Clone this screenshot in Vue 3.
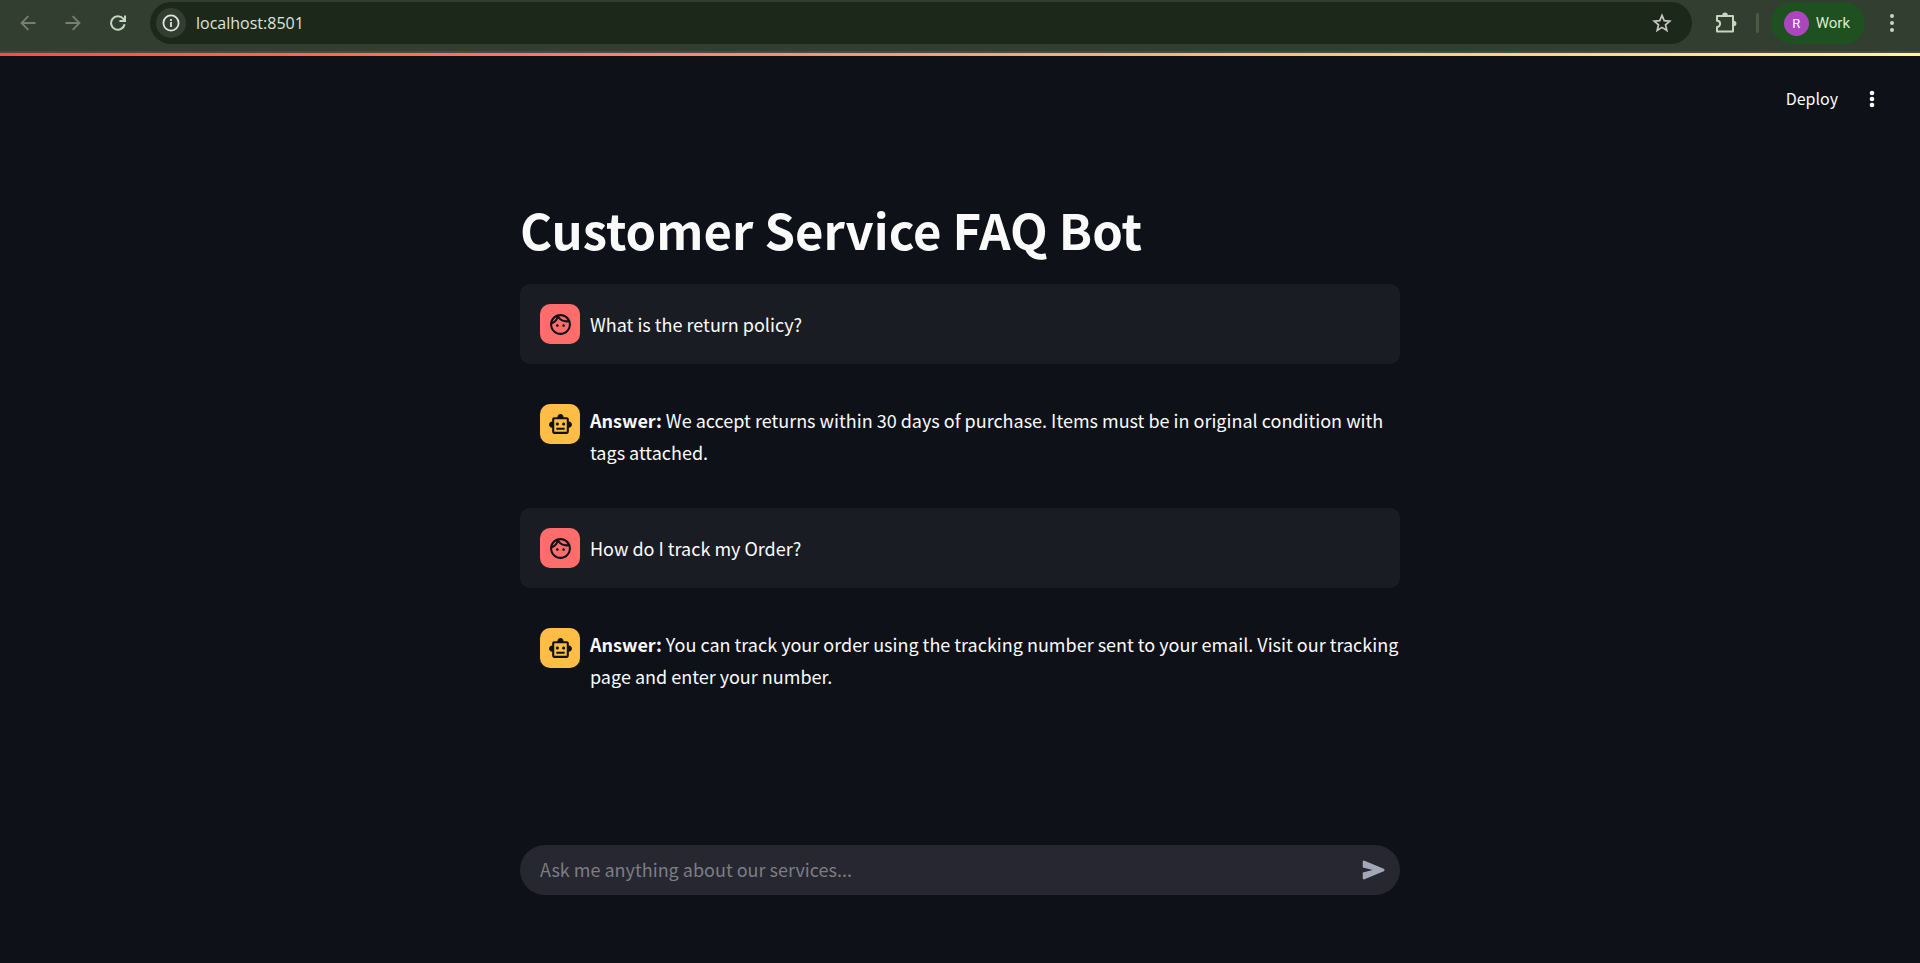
<script setup>
import { ref } from 'vue'

const address = ref('localhost:8501')
const question = ref('')
const messages = [
  { id: 1, role: 'user', text: 'What is the return policy?' },
  {
    id: 2,
    role: 'assistant',
    text: 'We accept returns within 30 days of purchase. Items must be in original condition with tags attached.',
  },
  { id: 3, role: 'user', text: 'How do I track my Order?' },
  {
    id: 4,
    role: 'assistant',
    text: 'You can track your order using the tracking number sent to your email. Visit our tracking page and enter your number.',
  },
]
</script>

<template>
  <div class="window">
    <header class="browser">
      <nav class="nav" aria-label="Browser navigation">
        <button class="tool dim" type="button" aria-label="Back">
          <svg width="16" height="16" viewBox="0 0 16 16" fill="none" stroke="currentColor" stroke-width="1.8"><path d="M15.5 8H1.5M8.3 1.2 1.5 8l6.8 6.8" /></svg>
        </button>
        <button class="tool dim" type="button" aria-label="Forward">
          <svg width="16" height="16" viewBox="0 0 16 16" fill="none" stroke="currentColor" stroke-width="1.8"><path d="M.5 8h14M7.7 1.2 14.5 8l-6.8 6.8" /></svg>
        </button>
        <button class="tool" type="button" aria-label="Reload">
          <svg width="16" height="16" viewBox="0 0 16 16" fill="none" stroke="currentColor" stroke-width="2"><path d="M14.6 9.2A6.8 6.8 0 1 1 13.2 3.7L14.8 5.6" /><path d="M15 .5v5.6H9.4" /></svg>
        </button>
      </nav>
      <div class="address">
        <button class="site-info" type="button" aria-label="Site information">
          <svg width="18" height="18" viewBox="0 0 18 18" fill="none" stroke="currentColor" stroke-width="1.8"><circle cx="9" cy="9" r="7.6" /><path d="M9 8v5M9 5v2" /></svg>
        </button>
        <input v-model="address" class="url" type="text" aria-label="Address" />
        <button class="star" type="button" aria-label="Bookmark">
          <svg width="20" height="20" viewBox="0 0 20 20" fill="none" stroke="currentColor" stroke-width="1.7"><path d="m10 2.4 2.2 5.2 5.6.5-4.3 3.7 1.3 5.6-4.8-3-4.8 3 1.3-5.6L2.2 8.1l5.6-.5z" /></svg>
        </button>
      </div>
      <button class="tool extensions" type="button" aria-label="Extensions">
        <svg width="22" height="22" viewBox="0 0 22 22"><path d="M2 4h16v15.500H2v-4.600a2.900 2.900 0 0 0 0-6.200z" fill="none" stroke="currentColor" stroke-width="2" stroke-linejoin="round" /><path d="M7.200 3.400a2.800 2.800 0 0 1 5.600 0zM18.600 8.700a2.800 2.800 0 0 1 0 5.600z" fill="currentColor" /></svg>
      </button>
      <span class="divider"></span>
      <button class="profile" type="button">
        <span class="initial">R</span>
        <span>Work</span>
      </button>
      <button class="tool menu" type="button" aria-label="Browser menu">
        <svg width="6" height="20" viewBox="0 0 6 20" fill="currentColor"><circle cx="3" cy="3" r="2" /><circle cx="3" cy="10" r="2" /><circle cx="3" cy="17" r="2" /></svg>
      </button>
    </header>
    <div class="decoration"></div>

    <div class="app-bar">
      <button class="deploy" type="button">Deploy</button>
      <button class="app-menu" type="button" aria-label="Main menu">
        <svg width="6" height="18" viewBox="0 0 6 18" fill="currentColor"><circle cx="3" cy="3" r="2.300" /><circle cx="3" cy="9" r="2.300" /><circle cx="3" cy="15" r="2.300" /></svg>
      </button>
    </div>

    <main class="column chat">
      <h1>Customer Service FAQ Bot</h1>
      <article v-for="m in messages" :key="m.id" class="message" :class="m.role">
        <span class="avatar">
          <svg v-if="m.role === 'user'" width="25" height="25" viewBox="0 0 24 24" fill="currentColor"><path d="M10.250 13c0 .69-.56 1.250-1.250 1.250S7.750 13.690 7.750 13s.56-1.250 1.250-1.250 1.250.56 1.250 1.250zM15 11.750c-.69 0-1.250.56-1.250 1.250s.56 1.250 1.250 1.250 1.250-.56 1.250-1.250-.56-1.250-1.250-1.250zm7 .25c0 5.520-4.480 10-10 10S2 17.520 2 12 6.480 2 12 2s10 4.480 10 10zM10.660 4.120C12.060 6.440 14.600 8 17.500 8c.46 0 .91-.05 1.340-.12C17.440 5.560 14.900 4 12 4c-.46 0-.91.05-1.340.12zM4.420 9.470c1.710-.97 3.030-2.550 3.660-4.440C6.370 6 5.050 7.580 4.420 9.470zM20 12c0-.78-.12-1.530-.33-2.240-.7.15-1.420.24-2.170.24-3.130 0-5.920-1.440-7.760-3.690C8.690 8.870 6.600 10.880 4 11.860c.01.04 0 .09 0 .14 0 4.410 3.590 8 8 8s8-3.590 8-8z" /></svg>
          <svg v-else width="25" height="25" viewBox="0 0 24 24" fill="currentColor"><path d="M20 9V7c0-1.100-.9-2-2-2h-3c0-1.660-1.340-3-3-3S9 3.340 9 5H6c-1.100 0-2 .9-2 2v2c-1.660 0-3 1.340-3 3s1.340 3 3 3v4c0 1.100.9 2 2 2h12c1.100 0 2-.9 2-2v-4c1.660 0 3-1.340 3-3s-1.340-3-3-3zm-2 10H6V7h12v12zM9 13c-.83 0-1.500-.67-1.500-1.500S8.170 10 9 10s1.500.67 1.500 1.500S9.830 13 9 13zm7.500-1.500c0 .83-.67 1.500-1.500 1.500s-1.500-.67-1.500-1.500.67-1.500 1.500-1.500 1.500.67 1.500 1.500zM8 15h8v2H8v-2z" /></svg>
        </span>
        <p><template v-if="m.role === 'assistant'"><strong>Answer:</strong>{{ ' ' }}</template>{{ m.text }}</p>
      </article>
    </main>

    <footer class="column composer">
      <form class="ask" @submit.prevent>
        <input v-model="question" type="text" aria-label="Question" placeholder="Ask me anything about our services..." />
        <button type="submit" aria-label="Send">
          <svg width="30" height="30" viewBox="0 -960 960 960" fill="currentColor"><path d="M792-443 176-183q-20 8-38-3.500T120-220v-180l320-80-320-80v-180q0-22 18-33.500t38-3.500l616 260q25 11 25 37t-25 37Z" /></svg>
        </button>
      </form>
    </footer>
  </div>
</template>

<style>
body {
  margin: 0;
  background: #0e1117;
}
</style>

<style scoped>
.window {
  min-height: 100vh;
  display: flex;
  flex-direction: column;
  background: #0e1117;
  color: #fafafa;
  font-family: "Noto Sans CJK SC", "Noto Sans", sans-serif;
  font-size: 18px;
  line-height: 32px;
}

.window * {
  box-sizing: border-box;
}

button,
input {
  margin: 0;
  padding: 0;
  border: 0;
  background: none;
  color: inherit;
  font: inherit;
}

button {
  display: flex;
  align-items: center;
  justify-content: center;
}

svg {
  display: block;
}

.browser {
  display: flex;
  align-items: center;
  padding: 2px 18px 7px 12px;
  border-bottom: 2px solid #464b48;
  background: #323e2f;
  color: #c4d8bd;
  font-family: "Open Sans", "Noto Sans", sans-serif;
  font-size: 16px;
  line-height: 24px;
}

.nav {
  display: flex;
  gap: 13px;
  margin-right: 16px;
}

.tool {
  width: 32px;
  height: 32px;
}

.dim {
  color: #768070;
}

.address {
  flex: 1;
  display: flex;
  align-items: center;
  height: 42px;
  padding: 0 20px 0 6px;
  border-radius: 21px;
  background: #1c2819;
  color: #dfe4dc;
}

.site-info {
  width: 30px;
  height: 30px;
  margin-right: 10px;
  border-radius: 50%;
  background: #323e2f;
}

.url {
  flex: 1;
  min-width: 0;
}

.star {
  color: #c7c8c3;
}

.extensions {
  margin-left: 18px;
}

.divider {
  width: 3px;
  height: 20px;
  margin: 0 12px 0 14px;
  border-radius: 2px;
  background: #4a5a46;
}

.profile {
  gap: 7px;
  height: 42px;
  padding: 0 15px 0 13px;
  border-radius: 21px;
  background: #1f5120;
  color: #dcebd3;
  font-family: Roboto, sans-serif;
  font-size: 15px;
}

.initial {
  width: 25px;
  height: 25px;
  border-radius: 50%;
  background: #ab47bc;
  color: #fff;
  font-size: 13px;
  line-height: 25px;
  text-align: center;
}

.menu {
  width: 20px;
  margin-left: 17px;
}

.decoration {
  height: 3px;
  background: linear-gradient(90deg, #ff4b4b, #fffd80);
}

.app-bar {
  display: flex;
  align-items: center;
  justify-content: flex-end;
  gap: 24px;
  padding: 26px 38px 26px 0;
}

.deploy {
  padding-bottom: 2px;
  font-size: 16px;
}

.app-menu {
  width: 20px;
  height: 32px;
}

.column {
  width: calc(100% - 40px);
  max-width: 880px;
  margin: 0 auto;
}

.chat {
  display: flex;
  flex-direction: column;
  gap: 20px;
  padding: 54px 0 40px;
}

h1 {
  margin: 0;
  padding-bottom: 2px;
  font-size: 49px;
  font-weight: 700;
  line-height: 66px;
}

.message {
  display: flex;
  gap: 10px;
  padding: 20px;
  border-radius: 10px;
}

.message.assistant {
  padding-right: 0;
}

.user {
  align-items: center;
  background: #1a1c24;
}

.avatar {
  flex: none;
  display: flex;
  align-items: center;
  justify-content: center;
  width: 40px;
  height: 40px;
  border-radius: 10px;
  background: #ff6c6c;
  color: #0e1117;
}

.assistant .avatar {
  background: #ffbd45;
}

p {
  margin: 0;
}

.composer {
  margin-top: auto;
  padding-bottom: 68px;
}

.ask {
  display: flex;
  align-items: center;
  height: 50px;
  padding: 0 11px 0 20px;
  border-radius: 25px;
  background: #262730;
}

.ask input {
  flex: 1;
  min-width: 0;
  padding-bottom: 2px;
}

.ask input::placeholder {
  color: #7d7d83;
  opacity: 1;
}

.ask button {
  color: #a3a8b8;
}
</style>
